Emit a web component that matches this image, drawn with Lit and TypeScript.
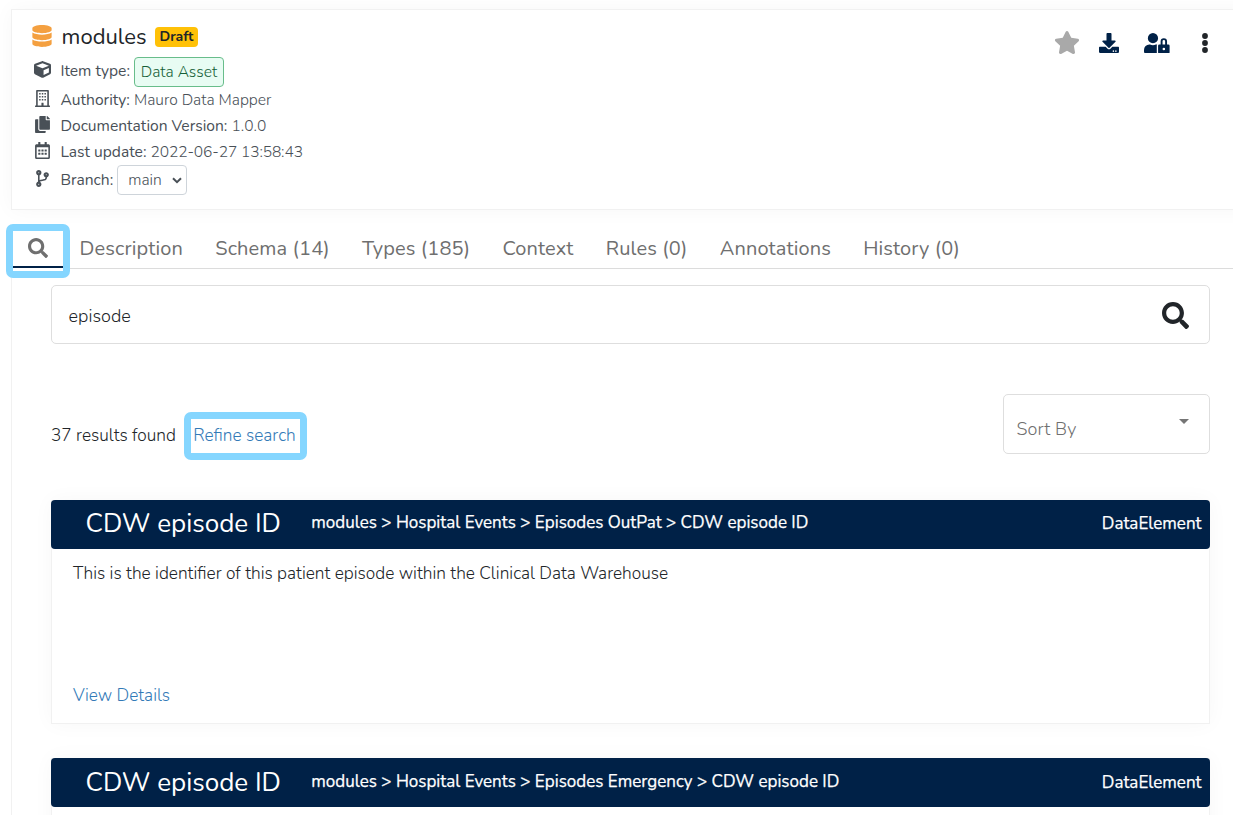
import { LitElement, html, css, svg } from "lit";
import { customElement, property } from "lit/decorators.js";

type Glyph = { box: string; body: unknown };

const dots = (cols: number[], rows: number[], w: number) =>
  rows.map((y) => cols.map((x) => svg`<rect x=${x} y=${y} width=${w} height=${w} rx="8"></rect>`));

const glyphs: Record<string, Glyph> = {
  database: { box: "0 0 448 512", body: svg`<path d="M448 73.143v45.714C448 159.143 347.667 192 224 192S0 159.143 0 118.857V73.143C0 32.857 100.333 0 224 0s224 32.857 224 73.143zM448 176v102.857C448 319.143 347.667 352 224 352S0 319.143 0 278.857V176c48.125 33.143 136.208 48.572 224 48.572S399.874 209.143 448 176zm0 160v102.857C448 479.143 347.667 512 224 512S0 479.143 0 438.857V336c48.125 33.143 136.208 48.572 224 48.572S399.874 369.143 448 336z"></path>` },
  cube: { box: "0 0 512 512", body: svg`<path d="M239.1 6.3l-208 78c-18.7 7-31.1 25-31.1 45v225.1c0 18.2 10.3 34.8 26.5 42.9l208 104c13.5 6.8 29.4 6.8 42.9 0l208-104c16.3-8.1 26.5-24.8 26.5-42.9V129.3c0-20-12.4-37.9-31.1-44.9l-208-78C262 2.2 250 2.2 239.1 6.3zM256 68.4l192 72v1.1l-192 78-192-78v-1.1l192-72zm32 356V275.5l160-65v133.9l-160 80z"></path>` },
  building: { box: "0 0 448 512", body: svg`<path fill-rule="evenodd" d="M436 470h-20V24c0-13.3-10.7-24-24-24H56C42.7 0 32 10.7 32 24v446H12c-6.6 0-12 5.4-12 12v30h448v-30c0-6.6-5.4-12-12-12zM80 44h288v426H256v-74c0-6.6-5.4-12-12-12h-40c-6.6 0-12 5.4-12 12v74H80z"></path>${dots([122, 202, 282], [92, 182, 272], 46)}` },
  copy: { box: "0 0 448 512", body: svg`<path d="M320 448v40c0 13.255-10.745 24-24 24H24c-13.255 0-24-10.745-24-24V120c0-13.255 10.745-24 24-24h72v296c0 30.879 25.121 56 56 56h168zm0-344V0H152c-13.255 0-24 10.745-24 24v368c0 13.255 10.745 24 24 24h272c13.255 0 24-10.745 24-24V128H344c-13.2 0-24-10.8-24-24zm120.971-31.029L375.029 7.029A24 24 0 0 0 358.059 0H352v96h96v-6.059a24 24 0 0 0-7.029-16.97z"></path>` },
  calendar: { box: "0 0 448 512", body: svg`<path d="M448 112v352c0 26.5-21.5 48-48 48H48c-26.5 0-48-21.5-48-48V112c0-26.5 21.5-48 48-48h48V12c0-6.6 5.4-12 12-12h40c6.6 0 12 5.4 12 12v52h128V12c0-6.6 5.4-12 12-12h40c6.6 0 12 5.4 12 12v52h48c26.5 0 48 21.5 48 48zm-48 346V160H48v298c0 3.3 2.7 6 6 6h340c3.3 0 6-2.7 6-6z"></path>${dots([96, 192, 288], [224, 320], 64)}` },
  branch: { box: "0 0 384 512", body: svg`<path d="M384 144c0-44.2-35.8-80-80-80s-80 35.8-80 80c0 36.4 24.3 67.1 57.5 76.8-.6 16.1-4.2 28.5-11 36.9-15.4 19.2-49.3 22.4-85.2 25.7-28.2 2.6-57.4 5.4-81.3 16.9v-144c32.5-10.2 56-40.5 56-76.3 0-44.2-35.8-80-80-80S0 35.8 0 80c0 35.8 23.5 66.1 56 76.3v199.3C23.5 365.9 0 396.2 0 432c0 44.2 35.8 80 80 80s80-35.8 80-80c0-34-21.2-63.1-51.2-74.6 3.1-5.2 7.8-9.8 14.9-13.4 16.2-8.2 40.4-10.4 66.1-12.8 42.2-3.9 90-8.4 118.2-43.4 14-17.4 21.1-39.8 21.6-67.9 31.6-10.8 54.4-40.7 54.4-75.9zM80 64c8.8 0 16 7.2 16 16s-7.2 16-16 16-16-7.2-16-16 7.2-16 16-16zm0 384c-8.8 0-16-7.2-16-16s7.2-16 16-16 16 7.2 16 16-7.2 16-16 16zm224-320c8.8 0 16 7.2 16 16s-7.2 16-16 16-16-7.2-16-16 7.2-16 16-16z"></path>` },
  star: { box: "0 0 576 512", body: svg`<path d="M259.3 17.8L194 150.2 47.9 171.5c-26.2 3.8-36.7 36.1-17.7 54.6l105.7 103-25 145.5c-4.5 26.3 23.2 46 46.4 33.7L288 439.6l130.7 68.7c23.2 12.2 50.9-7.4 46.4-33.7l-25-145.5 105.7-103c19-18.5 8.5-50.8-17.7-54.6L382 150.2 316.7 17.8c-11.7-23.6-45.6-23.9-57.4 0z"></path>` },
  download: { box: "0 0 512 512", body: svg`<path d="M216 0h80c13.3 0 24 10.7 24 24v168h87.7c17.8 0 26.7 21.5 14.1 34.1L269.7 378.3c-7.5 7.5-19.8 7.5-27.3 0L90.1 226.1c-12.6-12.6-3.7-34.1 14.1-34.1H192V24c0-13.3 10.7-24 24-24zm296 376v112c0 13.3-10.7 24-24 24H24c-13.3 0-24-10.7-24-24V376c0-13.3 10.7-24 24-24h146.7l49 49c20.1 20.1 52.5 20.1 72.6 0l49-49H488c13.3 0 24 10.7 24 24zm-124 88c0-11-9-20-20-20s-20 9-20 20 9 20 20 20 20-9 20-20zm64 0c0-11-9-20-20-20s-20 9-20 20 9 20 20 20 20-9 20-20z"></path>` },
  userLock: { box: "0 0 640 512", body: svg`<path d="M224 256A128 128 0 1 0 96 128a128 128 0 0 0 128 128zm96 64a63.08 63.08 0 0 1 8.1-30.5c-4.8-.5-9.5-1.5-14.5-1.5h-16.7a174.08 174.08 0 0 1-145.8 0h-16.7A134.43 134.43 0 0 0 0 422.4V464a48 48 0 0 0 48 48h280.9a63.54 63.54 0 0 1-8.9-32zm288-32h-32v-80a80 80 0 0 0-160 0v80h-32a32 32 0 0 0-32 32v160a32 32 0 0 0 32 32h224a32 32 0 0 0 32-32V320a32 32 0 0 0-32-32zM496 432a32 32 0 1 1 32-32 32 32 0 0 1-32 32zm32-144h-64v-80a32 32 0 0 1 64 0z"></path>` },
  more: { box: "0 0 6 20", body: svg`<circle cx="3" cy="3" r="2.9"></circle><circle cx="3" cy="10" r="2.9"></circle><circle cx="3" cy="17" r="2.9"></circle>` },
  search: { box: "0 0 512 512", body: svg`<path d="M505 442.7L405.3 343c-4.5-4.5-10.6-7-17-7H372c27.6-35.3 44-79.7 44-128C416 93.1 322.9 0 208 0S0 93.1 0 208s93.1 208 208 208c48.3 0 92.7-16.4 128-44v16.3c0 6.4 2.5 12.5 7 17l99.7 99.7c9.4 9.4 24.6 9.4 33.9 0l28.3-28.3c9.4-9.4 9.4-24.6.1-34zM208 336c-70.7 0-128-57.2-128-128 0-70.7 57.2-128 128-128 70.7 0 128 57.2 128 128 0 70.7-57.2 128-128 128z"></path>` },
  chevron: { box: "0 0 10 7", body: svg`<path d="M1 1.2 5 5.2 9 1.2" fill="none" stroke="currentColor" stroke-width="2"></path>` },
  caret: { box: "0 0 10 5", body: svg`<path d="M0 0h10L5 5z"></path>` },
};

@customElement("ui-icon")
class UiIcon extends LitElement {
  static styles = css`
    :host { display: inline-flex; flex: none; }
    svg { width: 100%; height: 100%; fill: currentColor; display: block; }
  `;
  @property() name = "search";
  render() {
    const g = glyphs[this.name];
    return html`<svg viewBox=${g.box} aria-hidden="true">${g.body}</svg>`;
  }
}

@customElement("result-card")
class ResultCard extends LitElement {
  @property() label = "";
  @property() path = "";
  @property() kind = "";
  @property() description = "";
  static styles = css`
    :host {
      display: flex; flex-direction: column; box-sizing: border-box; height: 224px;
      border: 1px solid #f1f1f1; background: #fff;
      box-shadow: 0 0 20px rgba(0, 0, 0, 0.035);
    }
    .head {
      display: flex; align-items: center; height: 49px; margin: -1px -1px 0; flex: none;
      padding: 0 8.5px 0 34.5px; box-sizing: border-box;
      background: #002147; color: #fff; border-radius: 4px; white-space: nowrap;
    }
    .label { width: 225.8px; font-size: 26px; padding-bottom: 1.4px; }
    .path { flex: 1; font-size: 17px; -webkit-text-stroke: 0.25px #fff; padding-bottom: 3.4px; }
    .kind { font-size: 17px; -webkit-text-stroke: 0.25px #fff; padding-bottom: 1.4px; }
    .body { flex: 1; display: flex; flex-direction: column; justify-content: space-between; padding: 13px 21px 15px; }
    .text, .more { font-size: 17.3px; font-weight: 300; line-height: 24px; }
    .more { color: #337ab7; align-self: flex-start; text-decoration: none; }
  `;
  render() {
    return html`
      <div class="head">
        <span class="label">${this.label}</span>
        <span class="path">${this.path}</span>
        <span class="kind">${this.kind}</span>
      </div>
      ${this.description
        ? html`<div class="body">
            <span class="text">${this.description}</span>
            <a class="more">View Details</a>
          </div>`
        : ""}
    `;
  }
}

@customElement("app-root")
class AppRoot extends LitElement {
  static styles = css`
    :host {
      display: block; height: 815px; overflow: hidden; background: #fff; color: #212529;
      font-family: Nunito, Lato, "Open Sans", sans-serif;
    }
    .summary {
      display: flex; justify-content: space-between; box-sizing: border-box;
      height: 201px; margin: 9px -20px 0 11px; padding: 13px 44px 0 20px;
      border: 1px solid #f1f1f1; box-shadow: 0 0 20px rgba(0, 0, 0, 0.035);
    }
    .title { display: flex; align-items: center; height: 28px; }
    .title ui-icon { width: 20px; height: 22px; color: #f4a040; margin: 0 9.6px 2px 0; }
    .name { font-size: 22px; }
    .draft {
      margin-left: 8.4px; height: 20px; width: 43px; border-radius: 4px; background: #ffc107;
      font-size: 14px; font-weight: 700; line-height: 19px; text-align: center;
    }
    .row { display: flex; align-items: center; height: 26px; font-size: 15.6px; font-weight: 300; color: #495057; }
    .row.tall { height: 30px; }
    .row.first { height: 30px; margin-top: 6px; }
    .key { white-space: pre; font-weight: 400; }
    .first .key { padding-bottom: 2px; }
    .slot { width: 20px; height: 17px; display: flex; justify-content: center; margin: 0 8.4px 3px 0; }
    .first .slot { margin-bottom: 5px; }
    .slot ui-icon { width: 17px; height: 17px; }
    .stamp { letter-spacing: -0.13px; }
    .chip {
      box-sizing: border-box; width: 90px; height: 30px; border: 1px solid #68bd8b; border-radius: 4px;
      background: #e8fcf3; color: #155f37; line-height: 28px; text-align: center;
    }
    .select {
      box-sizing: border-box; width: 70px; height: 30px; border: 1px solid #ced4da; border-radius: 4px;
      display: flex; align-items: center; justify-content: space-between; padding: 0 4px 0 10px;
    }
    .select ui-icon { width: 10px; height: 7px; }
    .actions { display: flex; align-items: center; height: 40px; color: #002147; }
    .actions .star { width: 26px; height: 25px; color: #a9a9a9; margin: 0 18.6px 1px 0; }
    .actions .download { width: 20px; height: 20px; margin-right: 25.4px; }
    .actions .lock { width: 25.6px; height: 20.5px; margin-right: 32px; }
    .actions .dots { width: 6px; height: 20px; color: #212529; }
    .tabs {
      display: flex; align-items: stretch; height: 59px; box-sizing: border-box; margin-left: 6px;
      border-bottom: 1px solid #dcdcdc; font-size: 20px; color: #6f6f6f; padding-top: 14px; white-space: nowrap;
    }
    .tab { display: flex; align-items: center; margin-right: 32.25px; height: 49px; letter-spacing: 0.13px; }
    .tab.active {
      flex: none; box-sizing: border-box; width: 64px; height: 54px; margin-right: 9.6px; padding: 0;
      border: 7px solid #85d6ff; border-radius: 7px; background: #fff; position: relative;
      flex-direction: column; justify-content: space-between;
    }
    .tab.active ui-icon { width: 20px; height: 20px; margin: 7.4px 1px 0 0; }
    .bar { width: 50px; height: 2px; background: #002147; margin-bottom: 3px; }
    .panel { margin-left: 11px; border-left: 1px solid #f1f1f1; padding: 16px 23px 0 39px; height: 600px; }
    .query {
      display: flex; align-items: center; justify-content: space-between; box-sizing: border-box; height: 59px;
      border: 1px solid #dedede; border-radius: 5px; padding: 3px 20px 0 16.6px; font-size: 18px; font-weight: 300;
    }
    .query ui-icon { width: 27px; height: 27px; margin-bottom: 1.6px; }
    .tools { display: flex; justify-content: space-between; margin-top: 50px; height: 60px; }
    .found { display: flex; align-items: center; height: 48px; margin-top: 18px; font-size: 17.3px; font-weight: 300; }
    .count { padding-bottom: 2px; width: 125px; white-space: nowrap; }
    .refine {
      box-sizing: border-box; width: 123px; height: 48px; margin-left: 8px; border: 7px solid #85d6ff;
      border-radius: 7px; color: #337ab7; line-height: 33px; text-align: center; padding-right: 2px; white-space: nowrap;
    }
    .sort {
      box-sizing: border-box; width: 207px; height: 60px; border: 1px solid #dedede; border-radius: 5px;
      display: flex; justify-content: space-between; padding: 22px 20px 0 12.6px; color: #6f6f6f;
      font-size: 18px; font-weight: 300; line-height: 25px; letter-spacing: 0.1px;
    }
    .sort ui-icon { width: 10px; height: 5px; margin-top: 2px; color: #757575; }
    .results { display: flex; flex-direction: column; gap: 34.4px; margin-top: 46px; }
  `;

  tabs = ["Description", "Schema (14)", "Types (185)", "Context", "Rules (0)", "Annotations", "History (0)"];

  row(icon: string, key: string, value: unknown, cls = "") {
    return html`<div class="row ${cls}">
      <span class="slot"><ui-icon name=${icon}></ui-icon></span><span class="key">${key} </span>${value}
    </div>`;
  }

  render() {
    return html`
      <header class="summary">
        <div>
          <div class="title">
            <ui-icon name="database"></ui-icon><span class="name">modules</span><span class="draft">Draft</span>
          </div>
          ${this.row("cube", "Item type:", html`<span class="chip">Data Asset</span>`, "first")}
          ${this.row("building", "Authority:", html`<span>Mauro Data Mapper</span>`)}
          ${this.row("copy", "Documentation Version:", html`<span>1.0.0</span>`)}
          ${this.row("calendar", "Last update:", html`<span class="stamp">2022-06-27 13:58:43</span>`)}
          ${this.row("branch", "Branch:", html`<span class="select">main<ui-icon name="chevron"></ui-icon></span>`, "tall")}
        </div>
        <div class="actions">
          <ui-icon class="star" name="star"></ui-icon>
          <ui-icon class="download" name="download"></ui-icon>
          <ui-icon class="lock" name="userLock"></ui-icon>
          <ui-icon class="dots" name="more"></ui-icon>
        </div>
      </header>
      <nav class="tabs">
        <span class="tab active"><ui-icon name="search"></ui-icon><span class="bar"></span></span>
        ${this.tabs.map((t) => html`<span class="tab">${t}</span>`)}
      </nav>
      <main class="panel">
        <div class="query"><span>episode</span><ui-icon name="search"></ui-icon></div>
        <div class="tools">
          <div class="found"><span class="count">37 results found</span><a class="refine">Refine search</a></div>
          <div class="sort"><span>Sort By</span><ui-icon name="caret"></ui-icon></div>
        </div>
        <div class="results">
          <result-card label="CDW episode ID" path="modules > Hospital Events > Episodes OutPat > CDW episode ID"
            kind="DataElement" description="This is the identifier of this patient episode within the Clinical Data Warehouse"></result-card>
          <result-card label="CDW episode ID" path="modules > Hospital Events > Episodes Emergency > CDW episode ID"
            kind="DataElement"></result-card>
        </div>
      </main>
    `;
  }
}
